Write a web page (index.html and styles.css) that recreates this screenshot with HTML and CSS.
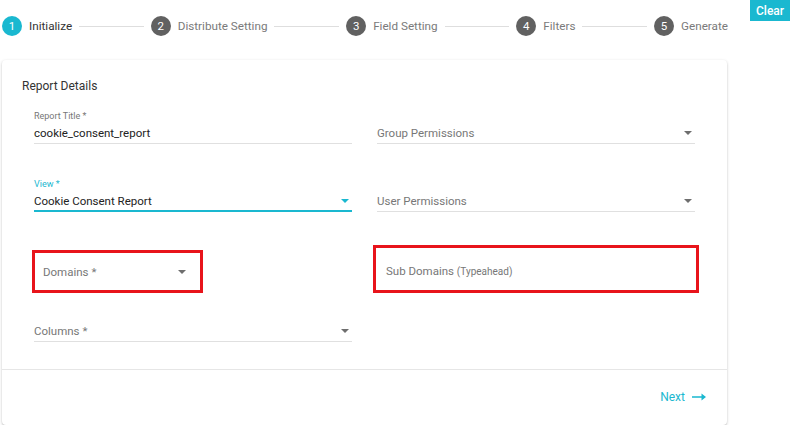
FILE: index.html
```html
<!DOCTYPE html>
<html lang="en">
<head>
    <meta charset="UTF-8">
    <meta name="viewport" content="width=device-width, initial-scale=1.0">
    <title>Report Wizard</title>
    <link rel="stylesheet" href="styles.css">
</head>
<body>
    <div class="topbar">
        <div class="stepper">
            <div class="step active"><span class="num">1</span><span class="step-label">Initialize</span></div>
            <div class="step-line"></div>
            <div class="step"><span class="num">2</span><span class="step-label">Distribute Setting</span></div>
            <div class="step-line"></div>
            <div class="step"><span class="num">3</span><span class="step-label">Field Setting</span></div>
            <div class="step-line"></div>
            <div class="step"><span class="num">4</span><span class="step-label">Filters</span></div>
            <div class="step-line"></div>
            <div class="step"><span class="num">5</span><span class="step-label">Generate</span></div>
        </div>
        <button class="clear-btn">Clear</button>
    </div>

    <div class="card">
        <div class="card-body">
            <div class="card-title">Report Details</div>

            <div class="form-row row-1">
                <div class="field">
                    <div class="field-label">Report Title *</div>
                    <div class="field-input">cookie_consent_report</div>
                </div>
                <div class="field">
                    <div class="field-input placeholder">Group Permissions<span class="caret"></span></div>
                </div>
            </div>

            <div class="form-row row-2">
                <div class="field focused">
                    <div class="field-label">View *</div>
                    <div class="field-input">Cookie Consent Report<span class="caret"></span></div>
                </div>
                <div class="field">
                    <div class="field-input placeholder">User Permissions<span class="caret"></span></div>
                </div>
            </div>

            <div class="form-row row-3">
                <div class="marked marked-domains">
                    <span class="placeholder">Domains *</span><span class="caret"></span>
                </div>
                <div class="marked marked-sub">
                    <span class="placeholder">Sub Domains <small>(Typeahead)</small></span>
                </div>
            </div>

            <div class="form-row row-4">
                <div class="field">
                    <div class="field-input placeholder">Columns *<span class="caret"></span></div>
                </div>
            </div>
        </div>
        <div class="card-footer">
            <a class="next-link" href="#">Next
                <svg width="14" height="8" viewBox="0 0 14 8"><path d="M0 3.2h9.5V0.5L14 4l-4.5 3.5V4.8H0z" fill="#1ab8d0"/></svg>
            </a>
        </div>
    </div>
</body>
</html>
```

FILE: styles.css
```css
body {
    margin: 0;
    font-family: Roboto, "Liberation Sans", sans-serif;
    background-color: #ffffff;
    color: #333;
}
.topbar {
    display: flex;
    align-items: flex-start;
    height: 60px;
}
.stepper {
    display: flex;
    align-items: center;
    width: 726px;
    margin-left: 2px;
    margin-top: 16px;
    height: 20px;
}
.step {
    display: flex;
    align-items: center;
    gap: 7px;
    font-size: 11.7px;
    color: #7a7a7a;
}
.step .num {
    width: 20px;
    height: 20px;
    border-radius: 50%;
    background-color: #616161;
    color: #fff;
    font-size: 11.5px;
    display: flex;
    align-items: center;
    justify-content: center;
}
.step.active {
    color: #333;
}
.step.active .num {
    background-color: #1ab8d0;
}
.step-line {
    flex: 1;
    height: 1px;
    background-color: #dedede;
    margin: 0 7px;
}
.clear-btn {
    margin-left: auto;
    width: 40px;
    height: 21px;
    border: none;
    padding: 0;
    background-color: #1ab8d0;
    color: #fff;
    font-family: Roboto, "Liberation Sans", sans-serif;
    font-size: 12px;
    font-weight: 500;
}
.card {
    margin-left: 2px;
    width: 725px;
    height: 365px;
    border-radius: 4px;
    background-color: #fff;
    box-shadow: 0 1px 3px rgba(0, 0, 0, 0.22), 0 1px 1px rgba(0, 0, 0, 0.08);
    display: flex;
    flex-direction: column;
}
.card-body {
    padding: 18px 32px 27px 20px;
    border-bottom: 1px solid #e6e6e6;
}
.card-title {
    font-size: 12px;
    line-height: 16px;
    color: #333;
    margin-bottom: 13px;
}
.form-row {
    display: flex;
    gap: 25px;
    padding-left: 12px;
}
.row-1 {
    margin-bottom: 31px;
}
.row-2 {
    margin-bottom: 33px;
}
.row-3 {
    align-items: flex-end;
    gap: 0;
    margin-bottom: 12px;
}
.field {
    width: 318px;
    height: 37px;
    position: relative;
    border-bottom: 1px solid #e0e0e0;
    box-sizing: border-box;
}
.field.focused {
    border-bottom: 2px solid #1ab8d0;
}
.field-label {
    position: absolute;
    top: 4px;
    left: 0;
    font-size: 9px;
    color: #777;
}
.focused .field-label {
    color: #1ab8d0;
}
.field-input {
    position: absolute;
    left: 0;
    right: 0;
    bottom: 2px;
    font-size: 11.5px;
    line-height: 16px;
    color: #222;
}
.focused .field-input {
    bottom: 1px;
}
.placeholder {
    color: #777;
}
.caret {
    position: absolute;
    right: 3px;
    top: 6px;
    width: 0;
    height: 0;
    border-left: 4px solid transparent;
    border-right: 4px solid transparent;
    border-top: 4px solid #6e6e6e;
}
.focused .caret {
    border-top-color: #1ab8d0;
}
.marked {
    position: relative;
    flex-shrink: 0;
    box-sizing: border-box;
    border: 3px solid #e8141b;
    display: flex;
    align-items: center;
    font-size: 11.5px;
}
.marked-domains {
    width: 171px;
    height: 43px;
    margin-left: -2px;
    padding-left: 8px;
}
.marked-domains .caret {
    right: 14px;
    top: 17px;
}
.marked-sub {
    width: 326px;
    height: 48px;
    margin-left: 170px;
    padding-left: 10px;
    padding-top: 3px;
}
.marked-sub small {
    font-size: 10px;
}
.card-footer {
    flex: 1;
    display: flex;
    align-items: center;
    justify-content: flex-end;
    padding-right: 21px;
}
.next-link {
    display: flex;
    align-items: center;
    gap: 7px;
    color: #1ab8d0;
    text-decoration: none;
    font-size: 12px;
    margin-top: -2px;
}
```
